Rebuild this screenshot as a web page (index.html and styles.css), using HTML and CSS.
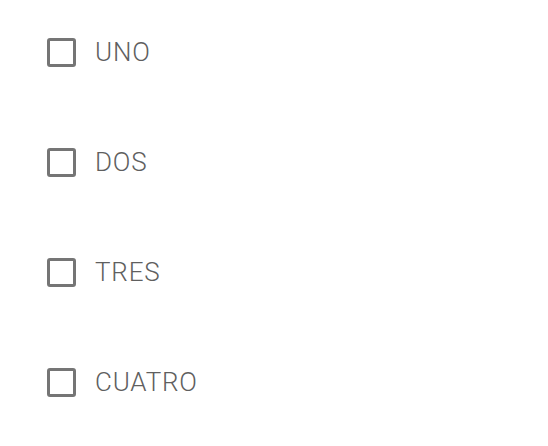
FILE: index.html
```html
<!DOCTYPE html>
<html>
<head>
<meta charset="utf-8">
<link rel="stylesheet" href="styles.css">
</head>
<body>
<div class="list">
  <label class="item"><span class="box"></span><span class="text">UNO</span></label>
  <label class="item"><span class="box"></span><span class="text">DOS</span></label>
  <label class="item"><span class="box"></span><span class="text">TRES</span></label>
  <label class="item"><span class="box"></span><span class="text">CUATRO</span></label>
</div>
</body>
</html>
```
FILE: styles.css
```css
html, body {
  margin: 0;
  padding: 0;
  background: #ffffff;
}
.list {
  display: flex;
  flex-direction: column;
  padding: 38px 0 0 47px;
  gap: 81px;
}
.item {
  display: flex;
  align-items: center;
  height: 29px;
  gap: 19px;
  font-family: Roboto, "Liberation Sans", sans-serif;
  font-size: 26px;
  font-weight: 300;
  letter-spacing: 0.8px;
  color: #5f5f5f;
}
.box {
  width: 29px;
  height: 29px;
  box-sizing: border-box;
  border: 3px solid #757575;
  border-radius: 3px;
  flex: none;
}
.text {
  line-height: 29px;
}
```
